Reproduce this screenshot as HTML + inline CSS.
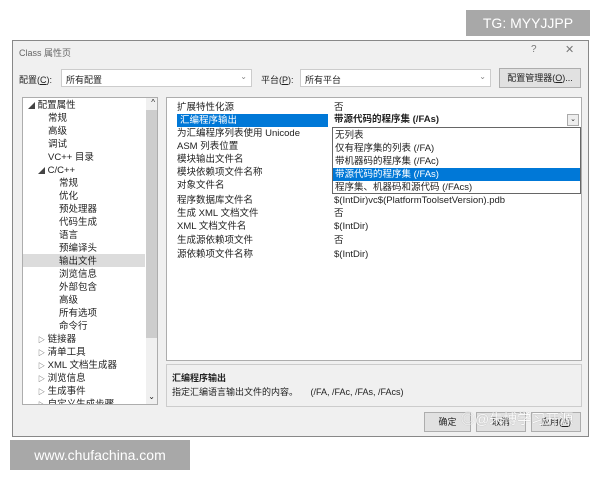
<!DOCTYPE html>
<html><head><meta charset="utf-8"><style>
*{margin:0;padding:0;box-sizing:border-box}
body{width:600px;height:480px;background:#fff;position:relative;overflow:hidden;font-family:"Liberation Sans","Noto Sans CJK SC",sans-serif;font-size:9.5px;color:#222}
.a{position:absolute;white-space:nowrap}
.dlg{position:absolute;left:12px;top:40px;width:577px;height:397px;background:#f0f0f0;border:1px solid #888}
.box{position:absolute;background:#fff;border:1px solid #adadad}
.btn{position:absolute;background:#e1e1e1;border:1px solid #adadad;text-align:center;line-height:18px;font-size:9px}
.r{position:absolute;left:0;white-space:nowrap;height:13px;line-height:13px}
.t{position:absolute;white-space:nowrap;height:13px;line-height:13px}
.tri{font-size:7px;color:#444}
</style></head><body>
<div class="a" style="left:466px;top:10px;width:124px;height:26px;background:#a8a8a8;color:#fff;font-size:14px;line-height:26px;text-align:center">TG: MYYJJPP</div>
<div class="dlg">
 <div class="a" style="left:6px;top:5px;color:#666;font-size:9px">Class 属性页</div>
 <div class="a" style="left:518px;top:3px;color:#777;font-size:10px">?</div>
 <div class="a" style="left:552px;top:2px;color:#777;font-size:11px">✕</div>
 <div class="a" style="left:6px;top:32px;font-size:9px">配置(<u>C</u>):</div>
 <div class="box" style="left:48px;top:28px;width:191px;height:18px;border-color:#ccc"><span class="a" style="left:4px;top:3px;font-size:9px">所有配置</span><span class="a" style="right:4px;top:2px;color:#888;font-size:8px">⌄</span></div>
 <div class="a" style="left:248px;top:32px;font-size:9px">平台(<u>P</u>):</div>
 <div class="box" style="left:287px;top:28px;width:191px;height:18px;border-color:#ccc"><span class="a" style="left:4px;top:3px;font-size:9px">所有平台</span><span class="a" style="right:4px;top:2px;color:#888;font-size:8px">⌄</span></div>
 <div class="btn" style="left:486px;top:27px;width:82px;height:20px">配置管理器(<u>O</u>)...</div>
 <!-- tree -->
 <div class="box" style="left:9px;top:56px;width:136px;height:308px;overflow:hidden">
  <div class="a" style="right:0;top:0;width:11px;height:306px;background:#f0f0f0"></div>
  <div class="a" style="right:0;top:12px;width:11px;height:228px;background:#cdcdcd"></div>
  <div class="a" style="right:2px;top:0;font-size:8px">^</div>
  <div class="a" style="right:2px;top:294px;font-size:8px">⌄</div>
  <div class="a" style="left:0;top:156px;width:122px;height:13px;background:#dcdcdc"></div>
  <div class="t" style="left:5px;top:1px"><span class="tri">◢</span> 配置属性</div>
  <div class="t" style="left:25px;top:14px">常规</div>
  <div class="t" style="left:25px;top:27px">高级</div>
  <div class="t" style="left:25px;top:40px">调试</div>
  <div class="t" style="left:25px;top:53px">VC++ 目录</div>
  <div class="t" style="left:15px;top:66px"><span class="tri">◢</span> C/C++</div>
  <div class="t" style="left:36px;top:79px">常规</div>
  <div class="t" style="left:36px;top:92px">优化</div>
  <div class="t" style="left:36px;top:105px">预处理器</div>
  <div class="t" style="left:36px;top:118px">代码生成</div>
  <div class="t" style="left:36px;top:131px">语言</div>
  <div class="t" style="left:36px;top:144px">预编译头</div>
  <div class="t" style="left:36px;top:157px">输出文件</div>
  <div class="t" style="left:36px;top:170px">浏览信息</div>
  <div class="t" style="left:36px;top:183px">外部包含</div>
  <div class="t" style="left:36px;top:196px">高级</div>
  <div class="t" style="left:36px;top:209px">所有选项</div>
  <div class="t" style="left:36px;top:222px">命令行</div>
  <div class="t" style="left:15px;top:235px"><span class="tri">▷</span> 链接器</div>
  <div class="t" style="left:15px;top:248px"><span class="tri">▷</span> 清单工具</div>
  <div class="t" style="left:15px;top:261px"><span class="tri">▷</span> XML 文档生成器</div>
  <div class="t" style="left:15px;top:274px"><span class="tri">▷</span> 浏览信息</div>
  <div class="t" style="left:15px;top:287px"><span class="tri">▷</span> 生成事件</div>
  <div class="t" style="left:15px;top:300px"><span class="tri">▷</span> 自定义生成步骤</div>
 </div>
 <!-- grid -->
 <div class="box" style="left:153px;top:56px;width:416px;height:264px">
  <div class="a" style="left:10px;top:3px;width:400px">
   <div class="r" style="top:0">扩展特性化源</div>
   <div class="r" style="top:13px;background:#0078d7;color:#fff;padding:0 3px;width:151px">汇编程序输出</div>
   <div class="r" style="top:26px">为汇编程序列表使用 Unicode</div>
   <div class="r" style="top:39px">ASM 列表位置</div>
   <div class="r" style="top:52px">模块输出文件名</div>
   <div class="r" style="top:65px">模块依赖项文件名称</div>
   <div class="r" style="top:78px">对象文件名</div>
   <div class="r" style="top:93px">程序数据库文件名</div>
   <div class="r" style="top:106px">生成 XML 文档文件</div>
   <div class="r" style="top:119px">XML 文档文件名</div>
   <div class="r" style="top:133px">生成源依赖项文件</div>
   <div class="r" style="top:147px">源依赖项文件名称</div>
  </div>
  <div class="a" style="left:167px;top:3px">
   <div class="r" style="top:0">否</div>
   <div class="r" style="top:93px">$(IntDir)vc$(PlatformToolsetVersion).pdb</div>
   <div class="r" style="top:106px">否</div>
   <div class="r" style="top:119px">$(IntDir)</div>
   <div class="r" style="top:133px">否</div>
   <div class="r" style="top:147px">$(IntDir)</div>
  </div>
  <div class="a" style="left:165px;top:15px;width:248px;height:14px;background:#fff;font-weight:bold;line-height:14px;padding-left:2px">带源代码的程序集 (/FAs)<span class="a" style="right:1px;top:1px;width:12px;height:12px;border:1px solid #aaa;background:#eee;font-weight:normal;font-size:7px;text-align:center;line-height:10px">⌄</span></div>
  <div class="a" style="left:165px;top:29px;width:249px;height:67px;background:#fff;border:1px solid #666;line-height:13px;padding-top:1px">
   <div style="padding-left:2px">无列表</div>
   <div style="padding-left:2px">仅有程序集的列表 (/FA)</div>
   <div style="padding-left:2px">带机器码的程序集 (/FAc)</div>
   <div style="padding-left:2px;background:#0078d7;color:#fff">带源代码的程序集 (/FAs)</div>
   <div style="padding-left:2px">程序集、机器码和源代码 (/FAcs)</div>
  </div>
 </div>
 <div class="box" style="left:153px;top:323px;width:416px;height:43px;background:#f0f0f0;border-color:#ccc">
  <div class="a" style="left:5px;top:6px;font-weight:bold;font-size:9px">汇编程序输出</div>
  <div class="a" style="left:5px;top:20px;font-size:9px">指定汇编语言输出文件的内容。&nbsp;&nbsp;&nbsp;&nbsp;&nbsp;(/FA, /FAc, /FAs, /FAcs)</div>
 </div>
 <div class="btn" style="left:411px;top:371px;width:47px;height:20px">确定</div>
 <div class="btn" style="left:463px;top:371px;width:50px;height:20px">取消</div>
 <div class="btn" style="left:518px;top:371px;width:50px;height:20px">应用(<u>A</u>)</div>
 <div class="a" style="left:448px;top:368px;color:#fff;font-size:14px;opacity:.85;text-shadow:0 0 1px #999">◎@朱博学习开源</div>
</div>
<div class="a" style="left:10px;top:440px;width:180px;height:30px;background:#a8a8a8;color:#fff;font-size:14px;line-height:30px;text-align:center">www.chufachina.com</div>
</body></html>
